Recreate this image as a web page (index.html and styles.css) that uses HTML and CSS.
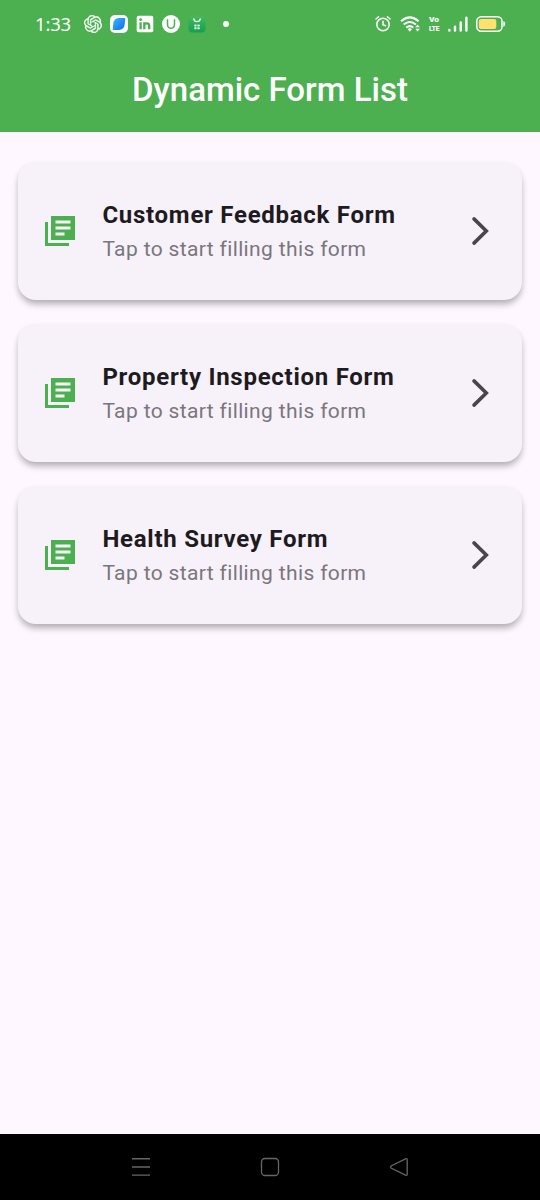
FILE: index.html
```html
<!DOCTYPE html>
<html lang="en">
<head>
<meta charset="utf-8">
<title>Dynamic Form List</title>
<link rel="stylesheet" href="styles.css">
</head>
<body>
<svg class="defs" width="0" height="0">
  <symbol id="books" viewBox="0 0 24 24"><path fill="#4caf50" fill-rule="evenodd" d="M4 6H2v16h16v-2H4zM22 2H6v16h16zM9 9h10v2H9zM9 13h6v2H9zM9 5h10v2H9z"/></symbol>
  <symbol id="chevron" viewBox="0 0 36 36"><path fill="none" stroke="#49454f" stroke-width="3.6" stroke-linecap="round" stroke-linejoin="miter" d="M12 5.900 24.300 18 12 30.100"/></symbol>
</svg>
<div class="screen">
  <header class="header">
    <div class="status">
      <span class="time">1:33</span>
      <div class="apps">
        <svg width="18" height="18" viewBox="0 0 24 24"><path fill="#fff" stroke="#fff" stroke-width=".3" d="M22.2819 9.8211a5.9847 5.9847 0 0 0-.5157-4.9108 6.0462 6.0462 0 0 0-6.5098-2.9A6.0651 6.0651 0 0 0 4.9807 4.1818a5.9847 5.9847 0 0 0-3.9977 2.9 6.0462 6.0462 0 0 0 .7427 7.0966 5.98 5.98 0 0 0 .511 4.9107 6.051 6.051 0 0 0 6.5146 2.9001A5.9847 5.9847 0 0 0 13.2599 24a6.0557 6.0557 0 0 0 5.7718-4.2058 5.9894 5.9894 0 0 0 3.9977-2.9001 6.0557 6.0557 0 0 0-.7475-7.0729zm-9.022 12.6081a4.4755 4.4755 0 0 1-2.8764-1.0408l.1419-.0804 4.7783-2.7582a.7948.7948 0 0 0 .3927-.6813v-6.7369l2.02 1.1686a.071.071 0 0 1 .038.052v5.5826a4.504 4.504 0 0 1-4.4945 4.4944zm-9.6607-4.1254a4.4708 4.4708 0 0 1-.5346-3.0137l.142.0852 4.783 2.7582a.7712.7712 0 0 0 .7806 0l5.8428-3.3685v2.3324a.0804.0804 0 0 1-.0332.0615L9.74 19.9502a4.4992 4.4992 0 0 1-6.1408-1.6464zM2.3408 7.8956a4.485 4.485 0 0 1 2.3655-1.9728V11.6a.7664.7664 0 0 0 .3879.6765l5.8144 3.3543-2.0201 1.1685a.0757.0757 0 0 1-.071 0l-4.8303-2.7865A4.504 4.504 0 0 1 2.3408 7.872zm16.5963 3.8558L13.1038 8.364 15.1192 7.2a.0757.0757 0 0 1 .071 0l4.8303 2.7913a4.4944 4.4944 0 0 1-.6765 8.1042v-5.6772a.79.79 0 0 0-.407-.667zm2.0107-3.0231l-.142-.0852-4.7735-2.7818a.7759.7759 0 0 0-.7854 0L9.409 9.2297V6.8974a.0662.0662 0 0 1 .0284-.0615l4.8303-2.7866a4.4992 4.4992 0 0 1 6.6802 4.66zM8.3065 12.863l-2.02-1.1638a.0804.0804 0 0 1-.038-.0567V6.0742a4.4992 4.4992 0 0 1 7.3757-3.4537l-.142.0805L8.704 5.459a.7948.7948 0 0 0-.3927.6813zm1.0976-2.3654l2.602-1.4998 2.6069 1.4998v2.9994l-2.5974 1.4997-2.6067-1.4997Z"/></svg>
        <svg width="18" height="18" viewBox="0 0 18 18"><defs><linearGradient id="blue" x1="0" y1="0" x2="1" y2="1"><stop offset="0" stop-color="#2bc0fa"/><stop offset="1" stop-color="#1766e8"/></linearGradient></defs><rect width="18" height="18" rx="5" fill="#fff"/><path fill="url(#blue)" d="M9 3h5.500Q15.700 3 15.200 4.500L14.800 8.500Q14.500 15 9 15H3.500Q2.300 15 2.800 13.500L3.200 9.500Q3.500 3 9 3z"/></svg>
        <svg width="18" height="18" viewBox="0 0 18 18"><rect x=".7" y=".7" width="16.600" height="16.600" rx="2" fill="#fff"/><g fill="none" stroke="#4caf50" stroke-width="2.300"><path d="M4.600 7.300V14.300M8.300 7.300V14.300M8.300 10.600Q8.300 8.300 10.700 8.300 13.200 8.300 13.200 10.600V14.300"/></g><circle cx="4.600" cy="4.700" r="1.400" fill="#4caf50"/></svg>
        <svg width="18" height="18" viewBox="0 0 18 18"><circle cx="9" cy="9" r="9" fill="#fff"/><path fill="none" stroke="#4caf50" stroke-width="1.500" d="M5.500 4.200v5.200a3.500 3.900 0 0 0 7 0V4.200"/></svg>
        <svg width="18" height="18" viewBox="0 0 18 18"><defs><linearGradient id="shop" x1="0" y1="0" x2="0" y2="1"><stop offset="0" stop-color="#4cb85a"/><stop offset=".5" stop-color="#28ae58"/><stop offset="1" stop-color="#189f4e"/></linearGradient></defs><rect x=".5" y=".5" width="17" height="17" rx="4" fill="url(#shop)"/><path fill="none" stroke="#fff" stroke-width="1.300" stroke-linecap="round" d="M5.800 4q.4 2.700 3.200 2.700T12.200 4"/><g fill="#e5f7e9"><rect x="6.300" y="9.400" width="2.300" height="2.100" rx=".5"/><rect x="9.400" y="9.400" width="2.300" height="2.100" rx=".5"/><rect x="6.300" y="12.200" width="2.300" height="2.100" rx=".5"/><rect x="9.400" y="12.200" width="2.300" height="2.100" rx=".5"/></g></svg>
      </div>
      <span class="dot"></span>
      <div class="system">
        <svg width="16" height="18" viewBox="0 0 16 18"><g fill="none" stroke="#fff" stroke-width="1.500" stroke-linecap="round"><circle cx="8" cy="9.500" r="6.200"/><path d="M8 6.200v3.600l2.500 1M1 4l2.500-2.200M15 4l-2.500-2.200"/></g></svg>
        <svg class="wifi" width="21" height="18" viewBox="0 0 21 18"><g fill="none" stroke="#fff" stroke-width="2"><path d="M1 6.200Q9.800-1.500 18.600 6.200M3.700 9.500q6.100-5 12.200 0M6.300 12.500q3.500-2.800 7 0"/></g><path fill="#fff" d="M7.600 14q2.200-1.700 4.400 0l-2.200 2.700zM15.300 12.200l2.300-2.700 2.300 2.700zM15.300 13.800l2.300 2.700 2.300-2.700z"/></svg>
        <span class="volte"><span class="vo">Vo</span><span class="lte">LTE</span></span>
        <svg class="signal" width="20" height="18" viewBox="0 0 20 18"><path fill="none" stroke="#fff" stroke-width="2.400" stroke-linecap="round" d="M1.400 15.500v-.6M7 15.500v-3.700M12.700 15.500V7.500M18.400 15.500V2.600"/></svg>
        <svg class="battery" width="30" height="18" viewBox="0 0 30 18"><rect x=".8" y="1.700" width="25.200" height="14.600" rx="4.500" fill="none" stroke="#fff" stroke-width="1.500"/><rect x="2.800" y="4" width="17.500" height="10" rx="2" fill="#ffe070"/><path fill="#fff" d="M27.300 6.300q2 .3 2 2.700t-2 2.700z"/></svg>
      </div>
    </div>
    <h1 class="title">Dynamic Form List</h1>
  </header>
  <main class="list">
    <article class="card">
      <svg class="icon"><use href="#books"/></svg>
      <div class="text"><h2 class="name">Customer Feedback Form</h2><p class="hint">Tap to start filling this form</p></div>
      <svg class="icon"><use href="#chevron"/></svg>
    </article>
    <article class="card">
      <svg class="icon"><use href="#books"/></svg>
      <div class="text"><h2 class="name">Property Inspection Form</h2><p class="hint">Tap to start filling this form</p></div>
      <svg class="icon"><use href="#chevron"/></svg>
    </article>
    <article class="card">
      <svg class="icon"><use href="#books"/></svg>
      <div class="text"><h2 class="name">Health Survey Form</h2><p class="hint">Tap to start filling this form</p></div>
      <svg class="icon"><use href="#chevron"/></svg>
    </article>
  </main>
  <nav class="nav">
    <svg width="20" height="20" viewBox="0 0 20 20"><path stroke="#666" stroke-width="1.400" d="M1 1.700h18M1 10h18M1 18.100h18"/></svg>
    <svg width="20" height="20" viewBox="0 0 20 20"><rect x="1.500" y="1.500" width="17" height="17" rx="3.500" fill="none" stroke="#666" stroke-width="1.300"/></svg>
    <svg width="20" height="20" viewBox="0 0 20 20"><path fill="none" stroke="#666" stroke-width="1.300" stroke-linejoin="round" d="M2 9 16.500 1.800q1.700-.5 1.700 1v14.400q0 1.500-1.700 1L2 11q-1-1 0-2z"/></svg>
  </nav>
</div>
</body>
</html>
```
FILE: styles.css
```css
* { box-sizing: border-box; }
body { margin: 0; background: #fef7ff; font-family: Roboto, sans-serif; }
h1, h2, p { margin: 0; }
svg { display: block; flex: none; }
.defs { position: absolute; }
.screen { width: 540px; height: 1200px; display: flex; flex-direction: column; }
.header { height: 132px; background: #4caf50; color: #fff; }
.status { height: 48px; display: flex; align-items: center; padding: 0 34px 0 35px; }
.time { width: 49px; font: 400 18.5px/24px "Noto Sans", sans-serif; letter-spacing: -.2px; }
.apps { display: flex; gap: 8px; }
.dot { width: 6px; height: 6px; margin-left: 17px; border-radius: 50%; background: #fff; }
.system { display: flex; align-items: center; margin-left: auto; }
.wifi { margin-left: 9px; }
.volte { display: flex; flex-direction: column; width: 12px; margin-left: 8px; font: 900 8px/9px Roboto, sans-serif; }
.vo { transform: scaleX(1.05); transform-origin: left; }
.lte { transform: scaleX(.8); transform-origin: left; }
.signal { margin-left: 7px; }
.battery { margin-left: 8px; }
.title { height: 84px; font-size: 33px; font-weight: 500; line-height: 84px; text-align: center; }
.list { flex: 1; display: flex; flex-direction: column; gap: 24px; padding: 30px 18px; }
.card { height: 138px; display: flex; align-items: center; gap: 24px; padding: 0 24px; border-radius: 18px; background: #f7f2fa; box-shadow: 0 5px 7px -1px rgba(0, 0, 0, .26), 0 3px 6px rgba(0, 0, 0, .07); }
.icon { width: 36px; height: 36px; }
.text { flex: 1; padding-left: .4px; }
.name { color: #1d1b20; font-size: 24px; font-weight: 700; line-height: 36px; letter-spacing: .73px; }
.hint { color: #7a767d; font-size: 21px; line-height: 32px; letter-spacing: .36px; }
.nav { height: 66px; display: flex; align-items: center; justify-content: center; gap: 109px; background: #000; }
```
